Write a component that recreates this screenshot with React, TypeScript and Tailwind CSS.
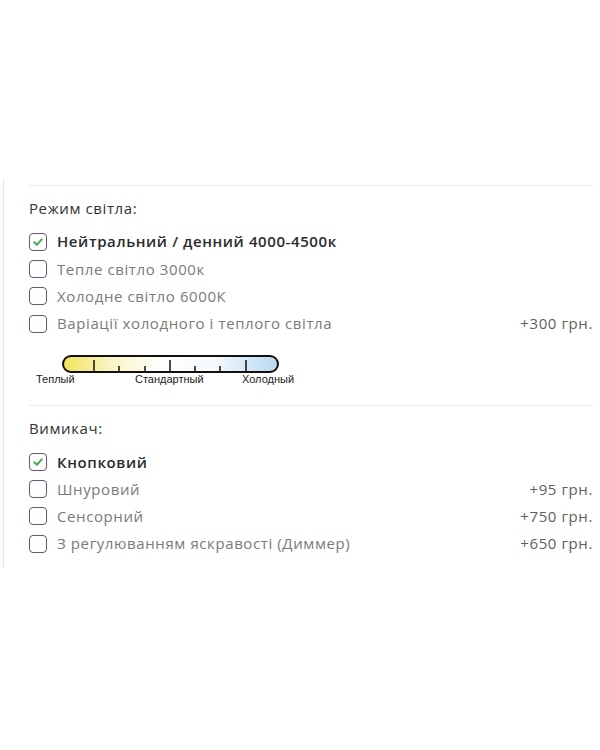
import React from "react";

type Option = {
  label: string;
  price?: string;
  checked?: boolean;
};

const lightModes: Option[] = [
  { label: "Нейтральний / денний 4000-4500к", checked: true },
  { label: "Тепле світло 3000к" },
  { label: "Холодне світло 6000К" },
  { label: "Варіації холодного і теплого світла", price: "+300 грн." },
];

const switches: Option[] = [
  { label: "Кнопковий", checked: true },
  { label: "Шнуровий", price: "+95 грн." },
  { label: "Сенсорний", price: "+750 грн." },
  { label: "З регулюванням яскравості (Диммер)", price: "+650 грн." },
];

function CheckBox({ checked }: { checked?: boolean }) {
  return (
    <span className="flex h-[18px] w-[18px] shrink-0 items-center justify-center rounded-[4px] border-[1.5px] border-[#6a5376] bg-white">
      {checked && (
        <svg width="12" height="12" viewBox="0 0 12 12" fill="none">
          <path
            d="M2.3 6.2 L4.9 8.7 L9.8 3.4"
            stroke="#45a85a"
            strokeWidth="2"
            strokeLinecap="round"
            strokeLinejoin="round"
          />
        </svg>
      )}
    </span>
  );
}

function OptionRow({ option }: { option: Option }) {
  return (
    <label className="flex h-[27.3px] items-center tracking-[0.6px]">
      <CheckBox checked={option.checked} />
      <span
        className={`ml-[10px] flex-1 text-[15px] ${
          option.checked ? "font-semibold text-[#2b2b2b]" : "text-[#7a7a7a]"
        }`}
      >
        {option.label}
      </span>
      {option.price && <span className="text-[15px] text-[#5f5f5f]">{option.price}</span>}
    </label>
  );
}

// colour temperature scale under the light-mode options
function TempScale() {
  const major = [93, 169, 245];
  const minor = [118, 144, 194, 219];
  return (
    <div className="relative h-[48px] w-[280px]">
      <svg width="280" height="32" viewBox="0 0 280 32" className="absolute left-0 top-0">
        <defs>
          <linearGradient id="temp" x1="0" x2="1" y1="0" y2="0">
            <stop offset="0" stopColor="#f1e45a" />
            <stop offset="0.22" stopColor="#fbf4c4" />
            <stop offset="0.45" stopColor="#ffffff" />
            <stop offset="0.7" stopColor="#f6fafd" />
            <stop offset="1" stopColor="#b7d8f2" />
          </linearGradient>
        </defs>
        <rect x="34" y="15" width="215" height="16" rx="8" fill="url(#temp)" stroke="#111" strokeWidth="2" />
        {major.map((x) => (
          <line key={x} x1={x - 28} x2={x - 28} y1="19" y2="31" stroke="#111" strokeWidth="1.5" />
        ))}
        {minor.map((x) => (
          <line key={x} x1={x - 28} x2={x - 28} y1="25" y2="31" stroke="#111" strokeWidth="1.5" />
        ))}
      </svg>
      <span className="absolute left-[7px] top-[30px] font-['Liberation_Sans',sans-serif] text-[11px] text-[#222]">
        Теплый
      </span>
      <span className="absolute left-[106px] top-[30px] font-['Liberation_Sans',sans-serif] text-[11px] text-[#222]">
        Стандартный
      </span>
      <span className="absolute left-[213px] top-[30px] font-['Liberation_Sans',sans-serif] text-[11px] text-[#222]">
        Холодный
      </span>
    </div>
  );
}

function Section({ title, options, children }: { title: string; options: Option[]; children?: React.ReactNode }) {
  return (
    <div className="border-t border-[#ececec] pt-[12px]">
      <h3 className="text-[15px] font-medium leading-[20px] tracking-[0.6px] text-[#333]">{title}</h3>
      <div className="mt-[10px] flex flex-col">
        {options.map((o) => (
          <OptionRow key={o.label} option={o} />
        ))}
      </div>
      {children}
    </div>
  );
}

export default function App() {
  return (
    <div className="h-[750px] w-[600px] bg-white font-['Open_Sans',sans-serif]">
      <div className="h-[179px]" />
      <div className="ml-[3px] border-l border-[#e6e6e6] pb-[11px] pl-[25px] pr-[7px] pt-[6px]">
        <Section title="Режим світла:" options={lightModes}>
          <div className="mt-[4px] mb-[16px]">
            <TempScale />
          </div>
        </Section>
        <Section title="Вимикач:" options={switches} />
      </div>
    </div>
  );
}
